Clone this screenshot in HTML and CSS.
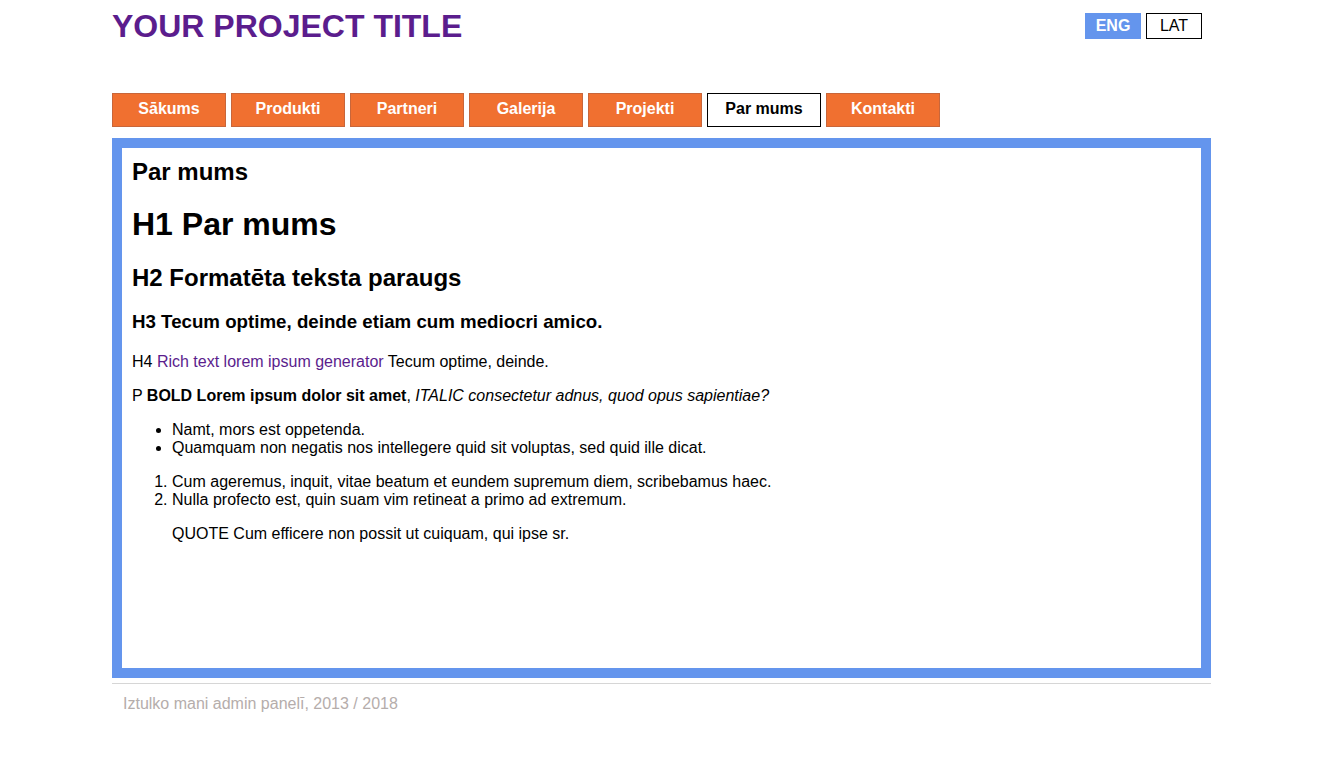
FILE: index.html
```html
<!DOCTYPE html>
<html lang="lv">
<head>
<meta charset="utf-8">
<title>Par mums</title>
<link rel="stylesheet" href="styles.css">
</head>
<body>
<div class="wrap">
  <header class="top">
    <div class="site-title">YOUR PROJECT TITLE</div>
    <div class="langs">
      <a class="lang lang-active" href="#">ENG</a>
      <a class="lang" href="#">LAT</a>
    </div>
  </header>
  <nav class="menu">
    <a class="menu-item" href="#">Sākums</a>
    <a class="menu-item" href="#">Produkti</a>
    <a class="menu-item" href="#">Partneri</a>
    <a class="menu-item" href="#">Galerija</a>
    <a class="menu-item" href="#">Projekti</a>
    <a class="menu-item menu-current" href="#">Par mums</a>
    <a class="menu-item" href="#">Kontakti</a>
  </nav>
  <main class="box">
    <h2 class="page-title">Par mums</h2>
    <h1>H1 Par mums</h1>
    <h2>H2 Formatēta teksta paraugs</h2>
    <h3>H3 Tecum optime, deinde etiam cum mediocri amico.</h3>
    <h4>H4 <a class="rich" href="#">Rich text lorem ipsum generator</a> Tecum optime, deinde.</h4>
    <p>P <strong>BOLD Lorem ipsum dolor sit amet</strong>, <em>ITALIC consectetur adnus, quod opus sapientiae?</em></p>
    <ul>
      <li>Namt, mors est oppetenda.</li>
      <li>Quamquam non negatis nos intellegere quid sit voluptas, sed quid ille dicat.</li>
    </ul>
    <ol>
      <li>Cum ageremus, inquit, vitae beatum et eundem supremum diem, scribebamus haec.</li>
      <li>Nulla profecto est, quin suam vim retineat a primo ad extremum.</li>
    </ol>
    <blockquote>QUOTE Cum efficere non possit ut cuiquam, qui ipse sr.</blockquote>
  </main>
  <footer class="foot">Iztulko mani admin panelī, 2013 / 2018</footer>
</div>
</body>
</html>
```

FILE: styles.css
```css
html, body {
  margin: 0;
  padding: 0;
  background: #fff;
}
body {
  font-family: "Liberation Sans", Arial, sans-serif;
  font-size: 16px;
  color: #000;
}
.wrap {
  width: 1100px;
  margin: 0 auto;
}
.top {
  display: flex;
  justify-content: space-between;
  align-items: flex-start;
  height: 93px;
}
.site-title {
  font-size: 32px;
  font-weight: bold;
  color: #5b1d8d;
  margin-top: 8px;
}
.langs {
  display: flex;
  gap: 5px;
  margin-top: 13px;
  margin-right: 10px;
}
.lang {
  box-sizing: border-box;
  width: 56px;
  height: 26px;
  line-height: 23px;
  text-align: center;
  border: 1px solid #000;
  color: #000;
  text-decoration: none;
  font-size: 16px;
}
.lang-active {
  background: #6495ed;
  border-color: #6495ed;
  color: #fff;
  font-weight: bold;
}
.menu {
  display: flex;
  gap: 5px;
  margin-bottom: 11px;
}
.menu-item {
  box-sizing: border-box;
  width: 114px;
  height: 34px;
  line-height: 30px;
  text-align: center;
  background: #f07030;
  border: 1px solid #c8663a;
  color: #fff;
  font-weight: bold;
  text-decoration: none;
}
.menu-current {
  background: #fff;
  border-color: #000;
  color: #000;
}
.box {
  border: 10px solid #6495ed;
  padding: 10px;
  box-sizing: border-box;
  height: 540px;
  margin-right: 1px;
}
.box h1, .box h2, .box h3, .box h4, .box p, .box ul, .box ol, .box blockquote {
  margin: 0;
}
.box .page-title {
  font-size: 24px;
  margin-bottom: 20px;
}
.box h1 {
  font-size: 32px;
  margin: 0 0 21px;
}
.box h2 {
  font-size: 24px;
  margin-bottom: 19px;
}
.box h3 {
  font-size: 18.72px;
  margin-bottom: 20px;
}
.box h4 {
  font-size: 16px;
  font-weight: normal;
  margin-bottom: 16px;
}
.rich {
  color: #5b1d8d;
  text-decoration: none;
}
.box p {
  margin-bottom: 16px;
}
.box ul, .box ol {
  padding-left: 40px;
  margin-bottom: 16px;
}
.box blockquote {
  margin-left: 40px;
}
.foot {
  margin-top: 5px;
  margin-right: 1px;
  border-top: 1px solid #d6d6d6;
  padding: 11px 11px 10px;
  color: #b5adab;
}
```
